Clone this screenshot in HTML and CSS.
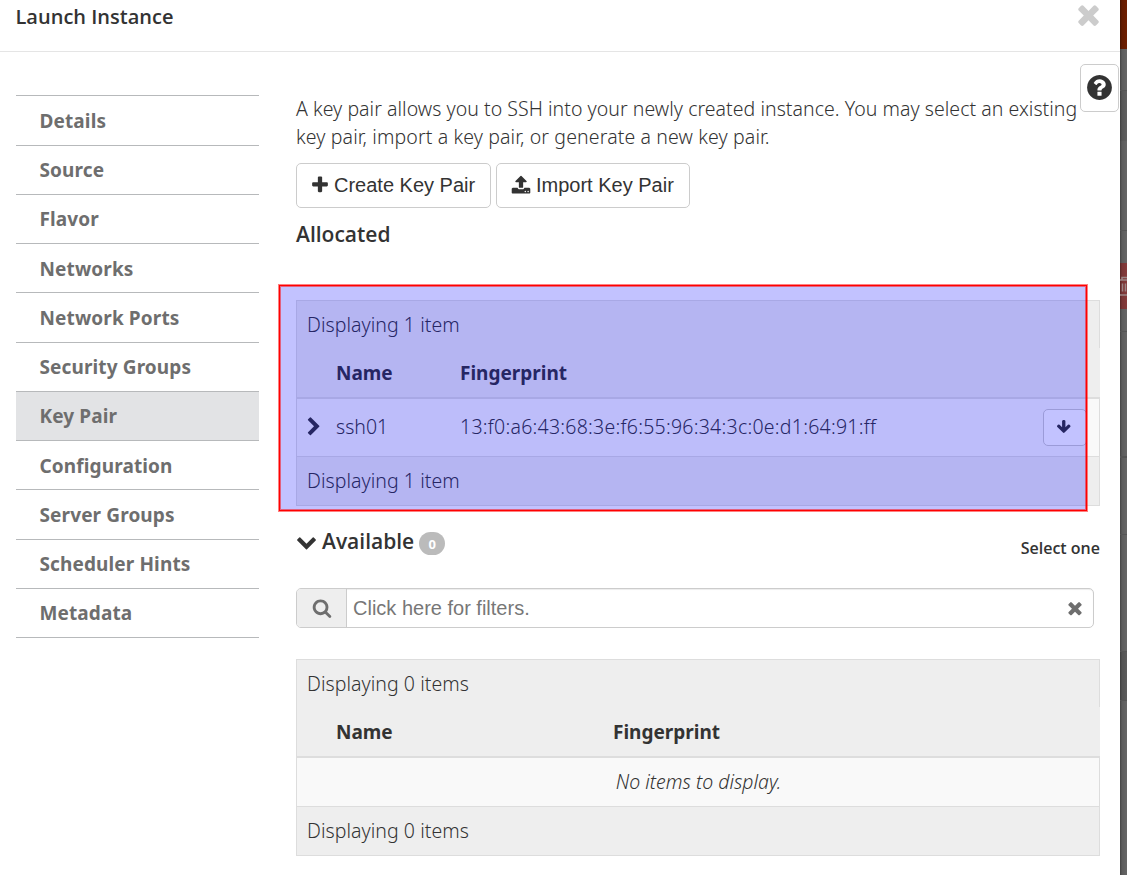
FILE: index.html
```html
<!DOCTYPE html>
<html lang="en">
<head>
<meta charset="utf-8">
<title>Launch Instance</title>
<link rel="stylesheet" href="styles.css">
</head>
<body>
<svg class="defs" width="0" height="0" aria-hidden="true">
  <symbol id="plus" viewBox="0 0 1792 1792"><path d="M1600 736v192q0 40-28 68t-68 28h-416v416q0 40-28 68t-68 28h-192q-40 0-68-28t-28-68v-416h-416q-40 0-68-28t-28-68v-192q0-40 28-68t68-28h416v-416q0-40 28-68t68-28h192q40 0 68 28t28 68v416h416q40 0 68 28t28 68z"/></symbol>
  <symbol id="times" viewBox="0 0 1792 1792"><path d="M1490 1322q0 40-28 68l-136 136q-28 28-68 28t-68-28l-294-294-294 294q-28 28-68 28t-68-28l-136-136q-28-28-28-68t28-68l294-294-294-294q-28-28-28-68t28-68l136-136q28-28 68-28t68 28l294 294 294-294q28-28 68-28t68 28l136 136q28 28 28 68t-28 68l-294 294 294 294q28 28 28 68z"/></symbol>
  <symbol id="upload" viewBox="0 0 1792 1792"><path d="M1344 1472q0-26-19-45t-45-19-45 19-19 45 19 45 45 19 45-19 19-45zm256 0q0-26-19-45t-45-19-45 19-19 45 19 45 45 19 45-19 19-45zm128-224v320q0 40-28 68t-68 28h-1472q-40 0-68-28t-28-68v-320q0-40 28-68t68-28h427q21 56 70.5 92t110.5 36h256q61 0 110.5-36t70.5-92h427q40 0 68 28t28 68zm-325-648q-17 40-59 40h-256v448q0 26-19 45t-45 19h-256q-26 0-45-19t-19-45v-448h-256q-42 0-59-40-17-39 14-69l448-448q18-19 45-19t45 19l448 448q31 30 14 69z"/></symbol>
  <symbol id="right" viewBox="0 0 1792 1792"><path d="M1363 877l-742 742q-19 19-45 19t-45-19l-166-166q-19-19-19-45t19-45l531-531-531-531q-19-19-19-45t19-45l166-166q19-19 45-19t45 19l742 742q19 19 19 45t-19 45z"/></symbol>
  <symbol id="down" viewBox="0 0 1792 1792"><path d="M1683 808l-742 741q-19 19-45 19t-45-19l-742-741q-19-19-19-45.500t19-45.500l166-165q19-19 45-19t45 19l531 531 531-531q19-19 45-19t45 19l166 165q19 19 19 45.500t-19 45.500z"/></symbol>
  <symbol id="search" viewBox="0 0 1792 1792"><path d="M1216 832q0-185-131.500-316.500t-316.500-131.500-316.500 131.500-131.500 316.500 131.500 316.500 316.500 131.500 316.500-131.500 131.500-316.500zm512 832q0 52-38 90t-90 38q-54 0-90-38l-343-342q-179 124-399 124-143 0-273.500-55.500t-225-150-150-225-55.500-273.500 55.500-273.500 150-225 225-150 273.500-55.500 273.500 55.500 225 150 150 225 55.500 273.500q0 220-124 399l343 343q37 37 37 90z"/></symbol>
  <symbol id="help" viewBox="0 0 1792 1792"><path d="M1024 1376v-192q0-14-9-23t-23-9h-192q-14 0-23 9t-9 23v192q0 14 9 23t23 9h192q14 0 23-9t9-23zm256-672q0-88-55.500-163t-138.500-116-170-41q-243 0-371 213-15 24 8 42l132 100q7 6 19 6 16 0 25-12 53-68 86-92 34-24 86-24 48 0 85.500 26t37.500 59q0 38-20 61t-68 45q-63 28-115.500 86.500t-52.500 125.500v36q0 14 9 23t23 9h192q14 0 23-9t9-23q0-19 21.500-49.500t54.500-49.500q32-18 49-28.500t46-35 44.500-48 28-60.500 12.500-81zm384 192q0 209-103 385.500t-279.500 279.500-385.500 103-385.500-103-279.500-279.500-103-385.500 103-385.500 279.500-279.500 385.500-103 385.500 103 279.500 279.500 103 385.500z"/></symbol>
  <symbol id="arrow" viewBox="0 0 1792 1792"><path d="M1675 832q0 53-37 90l-651 652q-39 37-91 37-53 0-90-37l-651-652q-38-36-38-90 0-53 38-91l74-75q39-37 91-37 53 0 90 37l294 294v-704q0-52 38-90t90-38h128q52 0 90 38t38 90v704l294-294q37-37 90-37 52 0 91 37l75 75q37 39 37 91z"/></symbol>
</svg>
<div class="page">
  <div class="modal">
    <header class="modal-header">
      <h1>Launch Instance</h1>
      <svg class="close"><use href="#times"/></svg>
    </header>
    <button class="help" aria-label="Help"><svg><use href="#help"/></svg></button>
    <div class="modal-body">
      <nav class="steps">
        <a>Details</a><a>Source</a><a>Flavor</a><a>Networks</a><a>Network Ports</a><a>Security Groups</a><a class="active">Key Pair</a><a>Configuration</a><a>Server Groups</a><a>Scheduler Hints</a><a>Metadata</a>
      </nav>
      <main class="content">
        <p class="intro"><span class="intro-first">A key pair allows you to SSH into your newly created instance. You may select an existing</span><br>key pair, import a key pair, or generate a new key pair.</p>
        <div class="actions">
          <button><svg><use href="#plus"/></svg><span>Create Key Pair</span></button>
          <button><svg><use href="#upload"/></svg><span>Import Key Pair</span></button>
        </div>
        <h2 class="allocated">Allocated</h2>
        <section class="table allocated-table">
          <div class="caption">Displaying 1 item</div>
          <div class="columns"><span class="name">Name</span><span>Fingerprint</span></div>
          <div class="row">
            <svg class="expand"><use href="#right"/></svg>
            <span class="name">ssh01</span>
            <span class="hash">13:f0:a6:43:68:3e:f6:55:96:34:3c:0e:d1:64:91:ff</span>
            <button class="remove" aria-label="Remove"><svg><use href="#arrow"/></svg></button>
          </div>
          <div class="footer">Displaying 1 item</div>
          <div class="highlight"></div>
        </section>
        <div class="available">
          <svg><use href="#down"/></svg>
          <h2>Available</h2>
          <span class="badge">0</span>
          <span class="hint">Select one</span>
        </div>
        <div class="filter">
          <span class="addon"><svg><use href="#search"/></svg></span>
          <span class="placeholder">Click here for filters.</span>
          <svg class="clear"><use href="#times"/></svg>
        </div>
        <section class="table available-table">
          <div class="caption">Displaying 0 items</div>
          <div class="columns"><span class="name">Name</span><span>Fingerprint</span></div>
          <div class="row empty">No items to display.</div>
          <div class="footer">Displaying 0 items</div>
        </section>
      </main>
    </div>
  </div>
  <aside class="backdrop">
    <div class="topbar"></div>
    <div class="band upper"></div>
    <div class="band mid"></div>
    <div class="band gap"></div>
    <div class="band above"></div>
    <div class="danger"><svg viewBox="0 0 18 20"><path d="M1 4h16M6 4V1.500h6V4M3 4v13.500q0 1.500 1.500 1.500h9q1.500 0 1.500-1.500V4M6.500 7.500v8M9.500 7.500v8M12.500 7.500v8"/></svg></div>
    <div class="band b1"></div>
    <div class="band b2"></div>
    <div class="band b3"></div>
    <div class="band b4"></div>
    <div class="band b5"></div>
    <div class="band rest"></div>
  </aside>
</div>
</body>
</html>
```

FILE: styles.css
```css
* { box-sizing: border-box; }
body {
  margin: 0;
  overflow: hidden;
  background: #fff;
  color: #333;
  font: 300 19.5px/28px "Noto Sans", "Open Sans", sans-serif;
}
h1, h2, p { margin: 0; }
svg { display: block; flex: none; width: 20px; height: 20px; fill: currentColor; }
.defs { position: absolute; width: 0; height: 0; }
button {
  display: flex;
  align-items: center;
  padding: 0;
  border: 1px solid #ccc;
  border-radius: 5px;
  background: #fff;
  color: #333;
}
.page { display: flex; width: 1127px; height: 875px; }
.modal { position: relative; width: 1120px; height: 875px; }
.modal-header {
  display: flex;
  justify-content: space-between;
  height: 52px;
  padding: 0 16px 0 15.500px;
  border-bottom: 1px solid #e5e5e5;
}
h1, h2 { font: 600 21px/28px "Open Sans", "Noto Sans", sans-serif; }
h1 { padding-top: 3px; font-size: 20px; }
.close { width: 31px; height: 31px; margin-top: -1px; color: #ccc; }
.help {
  position: absolute;
  top: 64px;
  right: 1px;
  width: 39px;
  height: 48px;
  padding-bottom: 2px;
  justify-content: center;
}
.help svg { width: 29px; height: 29px; }
.modal-body { display: flex; gap: 37px; padding: 43px 20px 0 16px; }

.steps { width: 243px; height: 543px; padding-top: 0.3px; border-top: 1px solid #b7b9bb; }
.steps a {
  display: flex;
  align-items: center;
  height: 49.25px;
  padding: 1px 0 0 23.500px;
  border-bottom: 1px solid #b7b9bb;
  color: #6e6e6e;
  font-size: 19px;
  font-weight: 700;
  letter-spacing: 0.12px;
}
.steps .active { background: #e2e3e5; }

.content { width: 804px; }
.intro { letter-spacing: 0.13px; white-space: nowrap; }
.intro-first { letter-spacing: 0.04px; }
.actions { display: flex; gap: 5px; margin-top: 12px; }
.actions button {
  gap: 4px;
  width: 195px;
  height: 45px;
  padding: 0 0 2px 13px;
  font: 400 20px "Liberation Sans", Arial, sans-serif;
}
.actions span { padding-top: 2px; }
.actions button:last-child { width: 194px; padding-left: 14px; gap: 5px; }
.allocated { margin-top: 12px; }

.table { position: relative; border: 1px solid #ddd; background: #eee; }
.allocated-table { margin-top: 52px; }
.caption, .footer, .columns, .row { display: flex; align-items: center; padding-left: 10px; }
.caption { height: 47px; letter-spacing: 0.05px; }
.columns {
  height: 51px;
  padding-left: 39px;
  margin-right: -1px;
  border-bottom: 2px solid #ddd;
  background: #eee;
  font-size: 19px;
  font-weight: 700;
}
.allocated-table .name { width: 124px; }
.available-table .name { width: 277px; }
.row { height: 57px; background: #f9f9f9; }
.row .expand { margin-left: -3px; margin-right: 12px; margin-bottom: 2px; }
.row span { padding-bottom: 1px; }
.hash { letter-spacing: 0.25px; }
.remove { width: 44px; height: 37px; margin-left: auto; margin-right: 12px; padding: 0 2px 2px 0; justify-content: center; }
.remove svg { width: 15.500px; height: 15.500px; }
.footer { height: 49px; border-top: 1px solid #ddd; letter-spacing: 0.05px; }
.row.empty { height: 48px; padding: 0 0 0 1px; justify-content: center; font-style: italic; }
.highlight {
  position: absolute;
  top: -17px;
  left: -19px;
  width: 810px;
  height: 228px;
  border: 1px solid rgba(255, 0, 0, .5);
  box-shadow: inset 0 0 0 1px #f00, inset 0 0 0 2px rgba(255, 0, 0, .5);
  background: rgba(0, 0, 255, .24);
  background-clip: padding-box;
}

.available { display: flex; height: 46px; margin-top: 21px; }
.available svg { width: 21px; height: 21px; margin-top: 4px; margin-right: 5px; }
.badge {
  width: 26px;
  height: 23px;
  margin: 5px 0 0 5px;
  border-radius: 12px;
  background: #bbb;
  color: #fff;
  font: 700 13px/24px "Noto Sans", sans-serif;
  text-align: center;
}
.hint { margin: 7px 0 0 auto; font: 600 16px/28px "Open Sans", sans-serif; }

.filter {
  display: flex;
  align-items: center;
  width: 798px;
  height: 40px;
  margin-top: 15px;
  border: 1px solid #ccc;
  border-radius: 5px;
  box-shadow: inset 0 1px 1px rgba(0, 0, 0, .075);
  color: #6e6e6e;
}
.addon {
  display: flex;
  align-items: center;
  height: 38px;
  width: 50px;
  padding-left: 15px;
  border-right: 1px solid #ccc;
  border-radius: 4px 0 0 4px;
  background: #eee;
}
.placeholder { padding-left: 6px; color: #777; font: 400 20px "Liberation Sans", Arial, sans-serif; }
.clear { margin-left: auto; margin-right: 8px; }
.available-table { margin-top: 31px; }

.backdrop { width: 7px; height: 875px; overflow: hidden; background: #666; }
.backdrop > div { background-image: linear-gradient(to right, rgba(0, 0, 0, .35), rgba(0, 0, 0, .1) 2px, transparent); }
.topbar { height: 49px; background-color: #6e1e00; }
.band { background-color: #666; border-bottom: 1px solid #555; }
.upper { height: 42px; }
.mid { height: 50px; background-color: #606060; border: 0; }
.gap { height: 90px; }
.above { height: 32px; border: 0; }
.danger { height: 46px; padding-top: 13px; background-color: #863b3b; }
.danger svg { width: 18px; height: 20px; margin-left: -4px; fill: none; stroke: #9a8585; stroke-width: 1.5; }
.b1 { height: 23px; }
.b2 { height: 126px; border-bottom-width: 2px; }
.b3 { height: 77px; }
.b4 { height: 117px; }
.b5 { height: 49px; background-color: #5c5c5c; }
.rest { height: 174px; border: 0; }
```
